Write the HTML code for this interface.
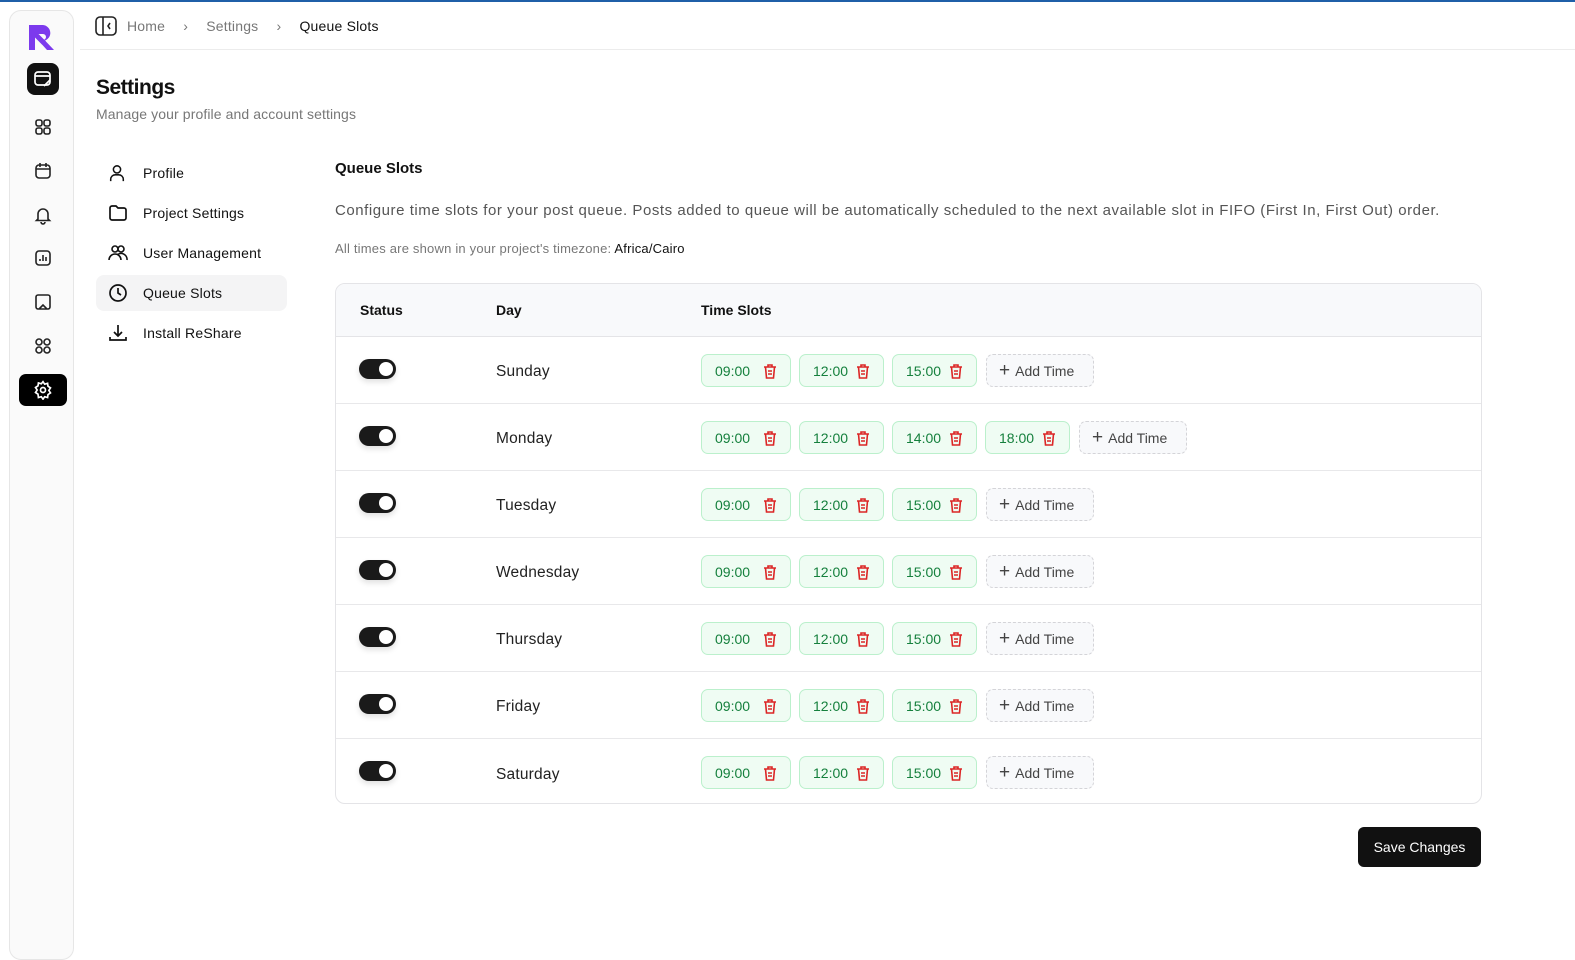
<!DOCTYPE html>
<html><head><meta charset="utf-8"><style>
*{box-sizing:border-box;margin:0;padding:0}
body{width:1575px;height:946px;overflow:hidden;background:#fff;font-family:"Liberation Sans",sans-serif;color:#111;position:relative}
.topline{position:absolute;left:0;top:0;width:1575px;height:2px;background:#1f5fa8}
.side{position:absolute;left:9px;top:10px;width:65px;height:950px;border:1px solid #e6e6e6;border-radius:12px;background:#fafafa}
.ic{position:absolute;left:0;width:65px;display:flex;justify-content:center}
.hdr{position:absolute;left:80px;top:2px;right:0;height:48px;border-bottom:1px solid #ececec}
.bc{position:absolute;left:127px;top:18px;font-size:14px;color:#777;white-space:nowrap;letter-spacing:.2px}
.bc b{font-weight:normal;color:#111}
h1{position:absolute;left:96px;top:76px;font-size:21px;font-weight:bold;letter-spacing:-0.5px}
.sub{position:absolute;left:96px;top:106px;font-size:14px;color:#777;letter-spacing:.1px}
.nav{position:absolute;left:96px;width:191px;height:36px;border-radius:8px;font-size:14px;display:flex;align-items:center;letter-spacing:.2px}
.nav svg{position:absolute;left:12px}
.nav span{position:absolute;left:47px}
.nav.act{background:#f4f4f5}
.t{position:absolute;left:335px;white-space:nowrap}
.tbl{position:absolute;left:335px;top:283px;width:1147px;height:521px;border:1px solid #e4e4e7;border-radius:10px;overflow:hidden}
.th{height:53px;background:#f8f9fb;border-bottom:1px solid #e4e4e7;position:relative;font-size:14px;font-weight:bold}
.row{height:67px;border-bottom:1px solid #e8e8ea;position:relative}
.row:last-child{border-bottom:none}
.c{position:absolute;top:50%;transform:translateY(-50%);white-space:nowrap}
.tog{position:absolute;left:23px;top:22px;width:37px;height:20px;border-radius:10px;background:#1a1a1a;box-shadow:0 3px 6px rgba(0,0,0,.12)}
.tog::after{content:"";position:absolute;right:3px;top:3px;width:14px;height:14px;border-radius:50%;background:#fff}
.day{left:160px;font-size:15.5px;color:#222;margin-top:2px;letter-spacing:.2px}
.chip{position:absolute;top:17px;height:33px;border:1px solid #bbf0cc;background:#effcf3;border-radius:7px;color:#15803d;font-size:14px;display:flex;align-items:center;padding-left:13px}
.chip svg{position:absolute;right:13px;top:9px}
.add{position:absolute;top:17px;height:33px;width:108px;border:1px dashed #d4d4d8;background:#f8f9fb;border-radius:7px;color:#444;font-size:14px;display:flex;align-items:center;padding-left:12px}
.save{position:absolute;left:1358px;top:827px;width:123px;height:40px;background:#111;border-radius:6px;color:#fff;font-size:14px;display:flex;align-items:center;justify-content:center}
</style></head><body>
<div class="topline"></div>
<div class="side">
 <div class="ic" style="top:12px"><svg width="32" height="28" viewBox="0 0 32 28"><path d="M2 2h14a8 8 0 0 1 2 15.5L27 27h-7l-9-10h5a3 3 0 0 0 0-6H8v16H2z" fill="#7c3aed"/><path d="M8 11l9 9" stroke="#7c3aed" stroke-width="5"/></svg></div>
 <div class="ic" style="top:52px"><div style="width:32px;height:32px;background:#111;border-radius:8px;display:flex;align-items:center;justify-content:center"><svg width="20" height="20" viewBox="0 0 20 20" fill="none" stroke="#fff" stroke-width="1.7"><rect x="2" y="3" width="15" height="13" rx="3"/><path d="M2 7h15M11 17l6-6"/></svg></div></div>
 <div class="ic" style="top:106px"><svg width="20" height="20" viewBox="0 0 20 20" fill="none" stroke="#222" stroke-width="1.6"><rect x="3" y="3" width="6" height="6" rx="2"/><rect x="11" y="3" width="6" height="6" rx="2"/><rect x="3" y="11" width="6" height="6" rx="2"/><rect x="11" y="11" width="6" height="6" rx="2"/></svg></div>
 <div class="ic" style="top:150px"><svg width="20" height="20" viewBox="0 0 20 20" fill="none" stroke="#222" stroke-width="1.6"><rect x="3" y="4" width="14" height="13" rx="3"/><path d="M3 8h14M7 2v4M13 2v4"/></svg></div>
 <div class="ic" style="top:194px"><svg width="20" height="20" viewBox="0 0 20 20" fill="none" stroke="#222" stroke-width="1.6"><path d="M5 14V9a5 5 0 0 1 10 0v5l1.5 1.5h-13zM8 17a2 2 0 0 0 4 0"/></svg></div>
 <div class="ic" style="top:237px"><svg width="20" height="20" viewBox="0 0 20 20" fill="none" stroke="#222" stroke-width="1.6"><rect x="3" y="3" width="14" height="14" rx="3"/><path d="M7 13v-2M10 13V7M13 13v-4"/></svg></div>
 <div class="ic" style="top:281px"><svg width="20" height="20" viewBox="0 0 20 20" fill="none" stroke="#222" stroke-width="1.6"><path d="M6 17H5a2 2 0 0 1-2-2V5a2 2 0 0 1 2-2h10a2 2 0 0 1 2 2v10a2 2 0 0 1-2 2h-1M6 17l4-4 4 4z"/></svg></div>
 <div class="ic" style="top:325px"><svg width="20" height="20" viewBox="0 0 20 20" fill="none" stroke="#222" stroke-width="1.6"><circle cx="6" cy="6" r="3"/><circle cx="14" cy="6" r="3"/><circle cx="6" cy="14" r="3"/><circle cx="14" cy="14" r="3"/></svg></div>
 <div class="ic" style="top:363px"><div style="width:48px;height:32px;background:#000;border-radius:7px;display:flex;align-items:center;justify-content:center"><svg width="20" height="20" viewBox="0 0 24 24" fill="none" stroke="#fff" stroke-width="2"><circle cx="12" cy="12" r="3"/><path d="M12 2l2 3 3.5-1 .5 3.5 3 2-2 3 2 3-3 2-.5 3.5-3.5-1-2 3-2-3-3.5 1L6 17l-3-2 2-3-2-3 3-2 .5-3.5 3.5 1z"/></svg></div></div>
</div>
<div class="hdr"></div>
<svg style="position:absolute;left:95px;top:16px" width="22" height="20" viewBox="0 0 22 20" fill="none" stroke="#222" stroke-width="1.6"><rect x="1" y="1" width="20" height="18" rx="4"/><path d="M8 1v18M15 7l-2 3 2 3"/></svg>
<div class="bc">Home <span style="margin:0 14px">›</span> Settings <span style="margin:0 14px">›</span> <b>Queue Slots</b></div>
<h1>Settings</h1>
<div class="sub">Manage your profile and account settings</div>
<div class="nav" style="top:155px"><svg width="18" height="18" viewBox="0 0 20 20" fill="none" stroke="#111" stroke-width="1.7"><circle cx="10" cy="6" r="4"/><path d="M3 19v-2a5 5 0 0 1 5-5h4a5 5 0 0 1 5 5v2"/></svg><span>Profile</span></div>
<div class="nav" style="top:195px"><svg width="20" height="18" viewBox="0 0 20 18" fill="none" stroke="#111" stroke-width="1.7"><path d="M2 4a2 2 0 0 1 2-2h4l2 2h6a2 2 0 0 1 2 2v8a2 2 0 0 1-2 2H4a2 2 0 0 1-2-2z"/></svg><span>Project Settings</span></div>
<div class="nav" style="top:235px"><svg width="20" height="18" viewBox="0 0 20 18" fill="none" stroke="#111" stroke-width="1.6"><circle cx="7" cy="5" r="3"/><circle cx="13" cy="5" r="3"/><path d="M1 16a6 6 0 0 1 12 0M9 11a6 6 0 0 1 10 5"/></svg><span>User Management</span></div>
<div class="nav act" style="top:275px"><svg width="20" height="20" viewBox="0 0 20 20" fill="none" stroke="#111" stroke-width="1.7"><circle cx="10" cy="10" r="8"/><path d="M10 5v5l3 2"/></svg><span>Queue Slots</span></div>
<div class="nav" style="top:315px"><svg width="20" height="20" viewBox="0 0 20 20" fill="none" stroke="#111" stroke-width="1.7"><path d="M10 2v11M6 9l4 4 4-4M2 14v3h16v-3"/></svg><span>Install ReShare</span></div>
<div class="t" style="top:160px;font-size:15px;font-weight:bold">Queue Slots</div>
<div class="t" style="top:202px;font-size:15px;color:#555;letter-spacing:.55px">Configure time slots for your post queue. Posts added to queue will be automatically scheduled to the next available slot in FIFO (First In, First Out) order.</div>
<div class="t" style="top:241px;font-size:13px;color:#777;letter-spacing:.2px">All times are shown in your project's timezone: <span style="color:#111">Africa/Cairo</span></div>
<div class="tbl">
 <div class="th"><span class="c" style="left:24px">Status</span><span class="c" style="left:160px">Day</span><span class="c" style="left:365px">Time Slots</span></div>
 ROWS
</div>
<div class="save">Save Changes</div>
<script>
var trash='<svg width="14" height="15" viewBox="0 0 14 15" fill="none" stroke="#dc2626" stroke-width="1.6"><path d="M1 3h12M5 3V1h4v2M2.5 3l1 11h7l1-11M5 7h4M5 10h4"/></svg>';
var days=[["Sunday",["09:00","12:00","15:00"]],["Monday",["09:00","12:00","14:00","18:00"]],["Tuesday",["09:00","12:00","15:00"]],["Wednesday",["09:00","12:00","15:00"]],["Thursday",["09:00","12:00","15:00"]],["Friday",["09:00","12:00","15:00"]],["Saturday",["09:00","12:00","15:00"]]];
var h='';
days.forEach(function(d){
 h+='<div class="row"><div class="tog"></div><span class="c day">'+d[0]+'</span>';
 var x=365;
 d[1].forEach(function(t,i){var w=(t=="09:00")?90:85; h+='<div class="chip" style="left:'+x+'px;width:'+w+'px">'+t+trash+'</div>'; x+=w+8;});
 h+='<div class="add" style="left:'+(x+1)+'px"><span style="font-size:19px;margin-right:5px;font-weight:300">+</span>Add Time</div></div>';
});
document.querySelector('.tbl').innerHTML=document.querySelector('.tbl').innerHTML.replace('ROWS',h);
</script>
</body></html>
